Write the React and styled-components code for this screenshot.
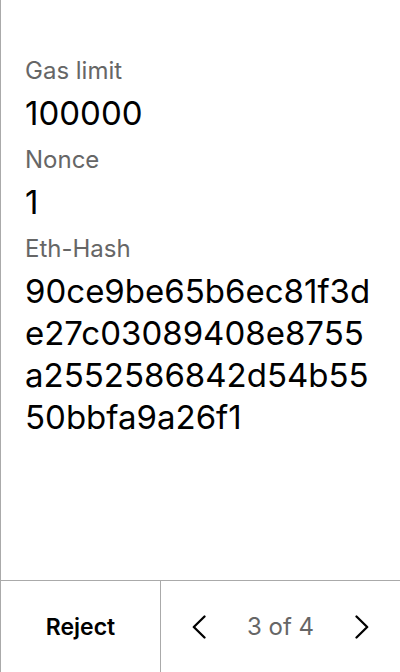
import React from 'react';
import styled, { createGlobalStyle } from 'styled-components';

const GlobalStyle = createGlobalStyle`
  html, body {
    margin: 0;
    padding: 0;
    background: #fff;
  }
  body {
    font-family: Inter, "Noto Sans", sans-serif;
  }
  * {
    box-sizing: border-box;
  }
`;

const Screen = styled.div`
  display: flex;
  flex-direction: column;
  height: 100vh;
  border-left: 1px solid #aaa;
  background: #fff;
`;

const Details = styled.div`
  flex: 1;
  padding: 56px 24px 0 24px;
  display: flex;
  flex-direction: column;
`;

const Field = styled.div`
  display: flex;
  flex-direction: column;
  gap: 6px;
  margin-bottom: 11px;
`;

const Label = styled.div`
  font-size: 24px;
  line-height: 30px;
  color: #666;
`;

const Value = styled.div`
  font-size: 33px;
  line-height: 42px;
  color: #000;
  word-break: break-all;
`;

const Footer = styled.div`
  display: flex;
  height: 92px;
  border-top: 1px solid #aaa;
`;

const RejectButton = styled.button`
  width: 160px;
  border: none;
  border-right: 1px solid #aaa;
  background: none;
  font-family: Inter, sans-serif;
  font-size: 23px;
  font-weight: 600;
  color: #000;
  cursor: pointer;
`;

const Pager = styled.div`
  flex: 1;
  display: flex;
  align-items: center;
  justify-content: space-between;
  padding: 0 14px;
`;

const ArrowButton = styled.button`
  width: 48px;
  height: 48px;
  border: none;
  background: none;
  display: flex;
  align-items: center;
  justify-content: center;
  cursor: pointer;
  padding: 0;
`;

const PageCount = styled.span`
  font-size: 24px;
  color: #666;
`;

const Chevron = ({ dir }) => (
  <svg width="14" height="24" viewBox="0 0 14 24" fill="none">
    <polyline
      points={dir === 'left' ? '12.5,1.5 1.8,12 12.5,22.5' : '1.5,1.5 12.2,12 1.5,22.5'}
      stroke="#000"
      strokeWidth="2.3"
      strokeLinecap="round"
      strokeLinejoin="round"
    />
  </svg>
);

const fields = [
  { label: 'Gas limit', value: '100000' },
  { label: 'Nonce', value: '1' },
  { label: 'Eth-Hash', value: '90ce9be65b6ec81f3de27c03089408e8755a2552586842d54b5550bbfa9a26f1' },
];

const App = () => {
  return (
    <>
      <GlobalStyle />
      <Screen>
        <Details>
          {fields.map((f) => (
            <Field key={f.label}>
              <Label>{f.label}</Label>
              <Value>{f.value}</Value>
            </Field>
          ))}
        </Details>
        <Footer>
          <RejectButton>Reject</RejectButton>
          <Pager>
            <ArrowButton aria-label="Previous">
              <Chevron dir="left" />
            </ArrowButton>
            <PageCount>3 of 4</PageCount>
            <ArrowButton aria-label="Next">
              <Chevron dir="right" />
            </ArrowButton>
          </Pager>
        </Footer>
      </Screen>
    </>
  );
};

export default App;
